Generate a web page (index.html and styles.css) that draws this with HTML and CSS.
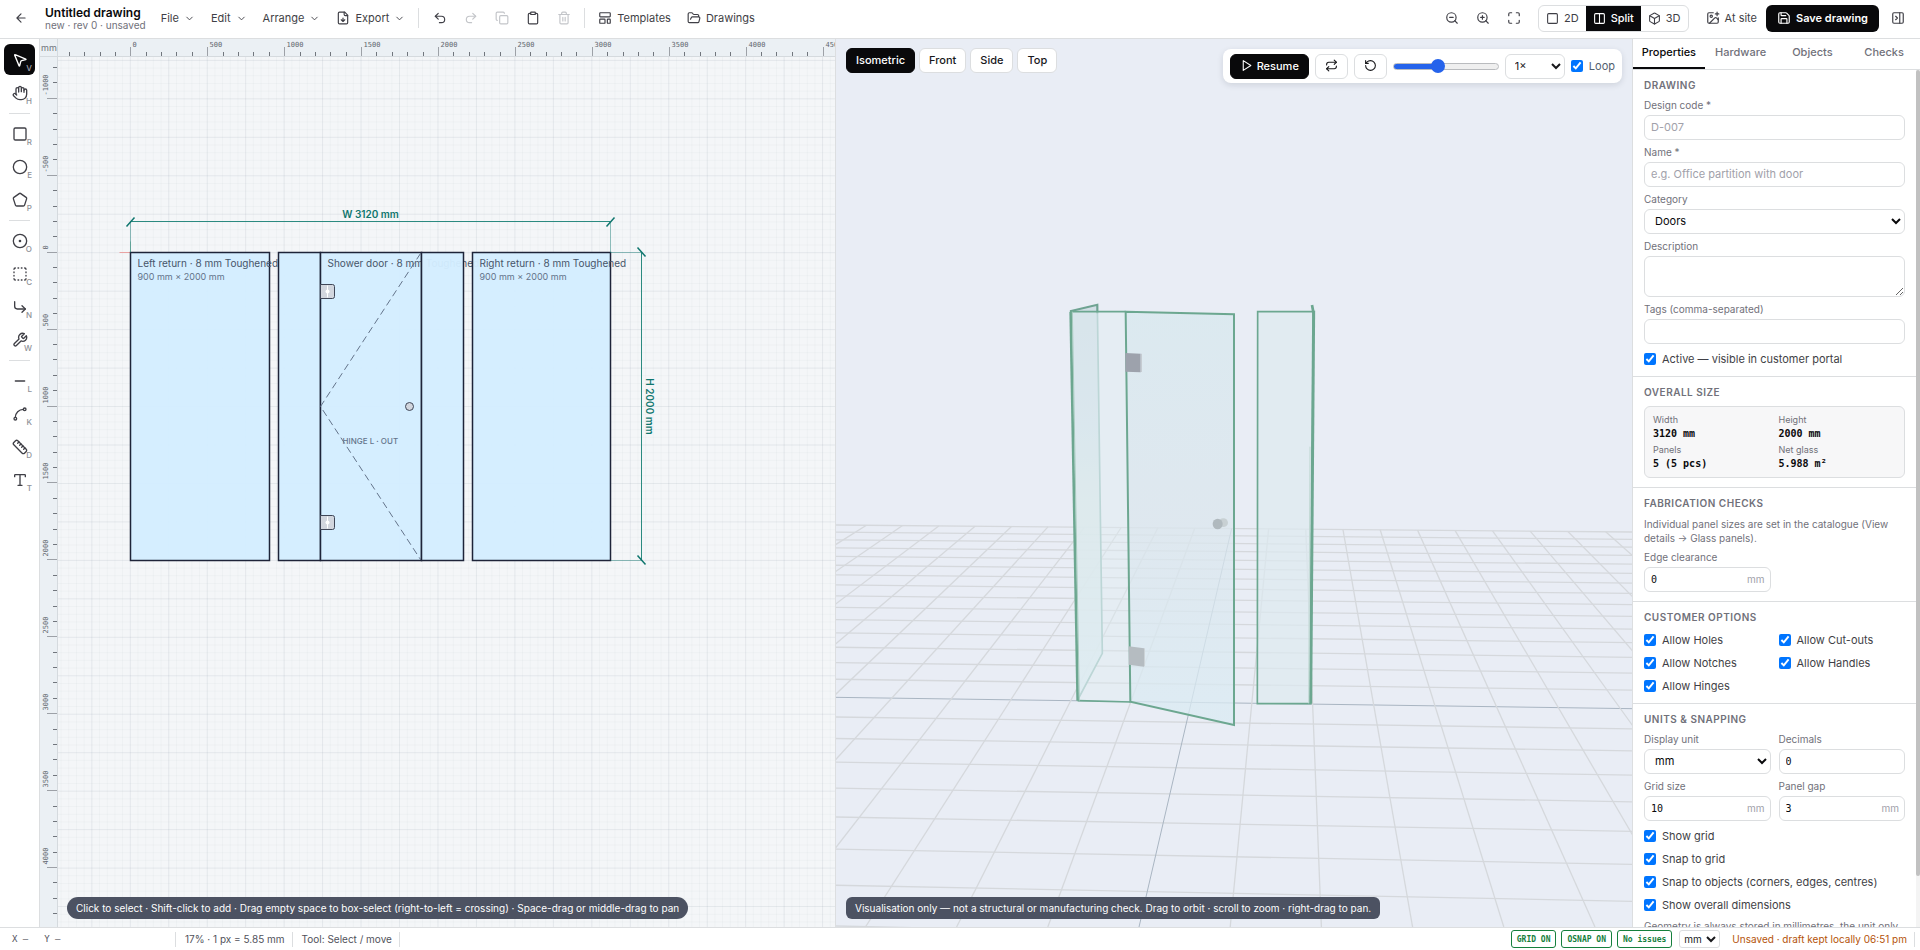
FILE: index.html
```html
<!DOCTYPE html>
<html lang="en">
<head>
<meta charset="utf-8">
<title>Untitled drawing</title>
<link rel="stylesheet" href="styles.css">
</head>
<body>
<svg class="sprite" aria-hidden="true">
  <symbol id="i-back" viewBox="0 0 24 24"><path d="m12 19-7-7 7-7M19 12H5"/></symbol>
  <symbol id="i-chev" viewBox="0 0 24 24"><path d="m6 9 6 6 6-6"/></symbol>
  <symbol id="i-file" viewBox="0 0 24 24"><path d="M15 2H6a2 2 0 0 0-2 2v16a2 2 0 0 0 2 2h12a2 2 0 0 0 2-2V7Z"/><path d="M14 2v4a2 2 0 0 0 2 2h4M12 18v-6M9 15l3 3 3-3"/></symbol>
  <symbol id="i-undo" viewBox="0 0 24 24"><path d="M9 14 4 9l5-5"/><path d="M4 9h10.500a5.500 5.500 0 0 1 0 11H11"/></symbol>
  <symbol id="i-redo" viewBox="0 0 24 24"><path d="m15 14 5-5-5-5"/><path d="M20 9H9.500a5.500 5.500 0 0 0 0 11H13"/></symbol>
  <symbol id="i-copy" viewBox="0 0 24 24"><rect x="8" y="8" width="14" height="14" rx="2"/><path d="M4 16c-1.100 0-2-.9-2-2V4c0-1.100.9-2 2-2h10c1.100 0 2 .9 2 2"/></symbol>
  <symbol id="i-paste" viewBox="0 0 24 24"><rect x="8" y="2" width="8" height="4" rx="1"/><path d="M16 4h2a2 2 0 0 1 2 2v14a2 2 0 0 1-2 2H6a2 2 0 0 1-2-2V6a2 2 0 0 1 2-2h2"/></symbol>
  <symbol id="i-trash" viewBox="0 0 24 24"><path d="M3 6h18M19 6v14c0 1-1 2-2 2H7c-1 0-2-1-2-2V6M8 6V4c0-1 1-2 2-2h4c1 0 2 1 2 2v2M10 11v6M14 11v6"/></symbol>
  <symbol id="i-template" viewBox="0 0 24 24"><rect x="3" y="3" width="18" height="7" rx="1"/><rect x="3" y="14" width="9" height="7" rx="1"/><rect x="16" y="14" width="5" height="7" rx="1"/></symbol>
  <symbol id="i-folder" viewBox="0 0 24 24"><path d="m6 14 1.500-2.900A2 2 0 0 1 9.240 10H20a2 2 0 0 1 1.940 2.500l-1.540 6a2 2 0 0 1-1.950 1.500H4a2 2 0 0 1-2-2V5a2 2 0 0 1 2-2h3.900a2 2 0 0 1 1.690.9l.81 1.200a2 2 0 0 0 1.670.9H18a2 2 0 0 1 2 2v2"/></symbol>
  <symbol id="i-zout" viewBox="0 0 24 24"><circle cx="11" cy="11" r="8"/><path d="m21 21-4.350-4.350M8 11h6"/></symbol>
  <symbol id="i-zin" viewBox="0 0 24 24"><circle cx="11" cy="11" r="8"/><path d="m21 21-4.350-4.350M8 11h6M11 8v6"/></symbol>
  <symbol id="i-fit" viewBox="0 0 24 24"><path d="M8 3H5a2 2 0 0 0-2 2v3M21 8V5a2 2 0 0 0-2-2h-3M3 16v3a2 2 0 0 0 2 2h3M16 21h3a2 2 0 0 0 2-2v-3"/></symbol>
  <symbol id="i-square" viewBox="0 0 24 24"><rect x="3" y="3" width="18" height="18" rx="2"/></symbol>
  <symbol id="i-split" viewBox="0 0 24 24"><rect x="3" y="3" width="18" height="18" rx="2"/><path d="M12 3v18"/></symbol>
  <symbol id="i-box" viewBox="0 0 24 24"><path d="M21 8a2 2 0 0 0-1-1.730l-7-4a2 2 0 0 0-2 0l-7 4A2 2 0 0 0 3 8v8a2 2 0 0 0 1 1.730l7 4a2 2 0 0 0 2 0l7-4A2 2 0 0 0 21 16Z"/><path d="m3.300 7 8.700 5 8.700-5M12 22V12"/></symbol>
  <symbol id="i-site" viewBox="0 0 24 24"><path d="M16 5h6M19 2v6M21 11.500V19a2 2 0 0 1-2 2H5a2 2 0 0 1-2-2V5a2 2 0 0 1 2-2h7.500"/><path d="m21 15-3.086-3.086a2 2 0 0 0-2.828 0L6 21"/><circle cx="9" cy="9" r="2"/></symbol>
  <symbol id="i-save" viewBox="0 0 24 24"><path d="M15.200 3a2 2 0 0 1 1.400.6l3.800 3.800a2 2 0 0 1 .6 1.400V19a2 2 0 0 1-2 2H5a2 2 0 0 1-2-2V5a2 2 0 0 1 2-2z"/><path d="M17 21v-7a1 1 0 0 0-1-1H8a1 1 0 0 0-1 1v7M7 3v4a1 1 0 0 0 1 1h7"/></symbol>
  <symbol id="i-panel" viewBox="0 0 24 24"><rect x="3" y="3" width="18" height="18" rx="2"/><path d="M15 3v18M8 9l3 3-3 3"/></symbol>
  <symbol id="i-play" viewBox="0 0 24 24"><path d="M6 3 20 12 6 21Z"/></symbol>
  <symbol id="i-repeat" viewBox="0 0 24 24"><path d="m17 2 4 4-4 4"/><path d="M3 11v-1a4 4 0 0 1 4-4h14M7 22l-4-4 4-4"/><path d="M21 13v1a4 4 0 0 1-4 4H3"/></symbol>
  <symbol id="i-rotate" viewBox="0 0 24 24"><path d="M3 12a9 9 0 1 0 9-9 9.750 9.750 0 0 0-6.740 2.740L3 8"/><path d="M3 3v5h5"/></symbol>
  <symbol id="i-select" viewBox="0 0 24 24"><path d="M4.037 4.688a.495.495 0 0 1 .651-.651l16 6.500a.5.5 0 0 1-.063.947l-6.124 1.580a2 2 0 0 0-1.438 1.435l-1.579 6.126a.5.5 0 0 1-.947.063z"/></symbol>
  <symbol id="i-hand" viewBox="0 0 24 24"><path d="M18 11V6a2 2 0 0 0-4 0M14 10V4a2 2 0 0 0-4 0v2M10 10.500V6a2 2 0 0 0-4 0v8"/><path d="M18 8a2 2 0 1 1 4 0v6a8 8 0 0 1-8 8h-2c-2.800 0-4.500-.86-5.990-2.340l-3.600-3.600a2 2 0 0 1 2.830-2.820L7 15"/></symbol>
  <symbol id="i-circle" viewBox="0 0 24 24"><circle cx="12" cy="12" r="10"/></symbol>
  <symbol id="i-pentagon" viewBox="0 0 24 24"><path d="M10.830 2.380a2 2 0 0 1 2.340 0l8 5.740a2 2 0 0 1 .73 2.250l-3.040 9.260a2 2 0 0 1-1.900 1.370H7.040a2 2 0 0 1-1.900-1.370L2.100 10.370a2 2 0 0 1 .73-2.250z"/></symbol>
  <symbol id="i-hole" viewBox="0 0 24 24"><circle cx="12" cy="12" r="10"/><circle cx="12" cy="12" r="1"/></symbol>
  <symbol id="i-dashed" viewBox="0 0 24 24"><path d="M5 3a2 2 0 0 0-2 2M19 3a2 2 0 0 1 2 2M21 19a2 2 0 0 1-2 2M5 21a2 2 0 0 1-2-2M9 3h1M9 21h1M14 3h1M14 21h1M3 9v1M21 9v1M3 14v1M21 14v1"/></symbol>
  <symbol id="i-notch" viewBox="0 0 24 24"><path d="m15 10 5 5-5 5"/><path d="M4 4v7a4 4 0 0 0 4 4h12"/></symbol>
  <symbol id="i-wrench" viewBox="0 0 24 24"><path d="M14.700 6.300a1 1 0 0 0 0 1.400l1.600 1.600a1 1 0 0 0 1.400 0l3.770-3.770a6 6 0 0 1-7.940 7.940l-6.910 6.910a2.120 2.120 0 0 1-3-3l6.910-6.910a6 6 0 0 1 7.940-7.940l-3.760 3.760z"/></symbol>
  <symbol id="i-line" viewBox="0 0 24 24"><path d="M5 12h14"/></symbol>
  <symbol id="i-spline" viewBox="0 0 24 24"><circle cx="19" cy="5" r="2"/><circle cx="5" cy="19" r="2"/><path d="M5 17A12 12 0 0 1 17 5"/></symbol>
  <symbol id="i-ruler" viewBox="0 0 24 24"><path d="M21.300 15.300a2.400 2.400 0 0 1 0 3.400l-2.600 2.600a2.400 2.400 0 0 1-3.400 0L2.700 8.700a2.410 2.410 0 0 1 0-3.400l2.600-2.600a2.410 2.410 0 0 1 3.400 0Z"/><path d="m14.500 12.500 2-2M11.500 9.500l2-2M8.500 6.500l2-2M17.500 15.500l2-2"/></symbol>
  <symbol id="i-type" viewBox="0 0 24 24"><path d="M12 4v16M4 7V5a1 1 0 0 1 1-1h14a1 1 0 0 1 1 1v2M9 20h6"/></symbol>
</svg>

<div class="app">
  <header class="topbar">
    <button class="icon-btn" aria-label="Back"><svg class="icon"><use href="#i-back"/></svg></button>
    <div class="doc">
      <h1 class="doc-title">Untitled drawing</h1>
      <p class="doc-sub">new · rev 0 · unsaved</p>
    </div>
    <nav class="menus">
      <button class="menu-btn">File<svg class="chev"><use href="#i-chev"/></svg></button>
      <button class="menu-btn">Edit<svg class="chev"><use href="#i-chev"/></svg></button>
      <button class="menu-btn">Arrange<svg class="chev"><use href="#i-chev"/></svg></button>
      <button class="menu-btn"><svg class="icon"><use href="#i-file"/></svg>Export<svg class="chev"><use href="#i-chev"/></svg></button>
    </nav>
    <span class="bar-sep"></span>
    <div class="group">
      <button class="icon-btn" aria-label="Undo"><svg class="icon"><use href="#i-undo"/></svg></button>
      <button class="icon-btn" aria-label="Redo" disabled><svg class="icon"><use href="#i-redo"/></svg></button>
      <button class="icon-btn" aria-label="Copy" disabled><svg class="icon"><use href="#i-copy"/></svg></button>
      <button class="icon-btn" aria-label="Paste"><svg class="icon"><use href="#i-paste"/></svg></button>
      <button class="icon-btn" aria-label="Delete" disabled><svg class="icon"><use href="#i-trash"/></svg></button>
    </div>
    <span class="bar-sep"></span>
    <div class="group">
      <button class="menu-btn"><svg class="icon"><use href="#i-template"/></svg>Templates</button>
      <button class="menu-btn"><svg class="icon"><use href="#i-folder"/></svg>Drawings</button>
    </div>
    <div class="topbar-right">
      <div class="group">
        <button class="icon-btn" aria-label="Zoom out"><svg class="icon"><use href="#i-zout"/></svg></button>
        <button class="icon-btn" aria-label="Zoom in"><svg class="icon"><use href="#i-zin"/></svg></button>
        <button class="icon-btn" aria-label="Fit to view"><svg class="icon"><use href="#i-fit"/></svg></button>
      </div>
      <div class="segmented">
        <button class="seg"><svg class="icon-sm"><use href="#i-square"/></svg>2D</button>
        <button class="seg seg-on"><svg class="icon-sm"><use href="#i-split"/></svg>Split</button>
        <button class="seg"><svg class="icon-sm"><use href="#i-box"/></svg>3D</button>
      </div>
      <button class="menu-btn"><svg class="icon"><use href="#i-site"/></svg>At site</button>
      <button class="save-btn"><svg class="icon"><use href="#i-save"/></svg>Save drawing</button>
      <button class="icon-btn" aria-label="Close panel"><svg class="icon"><use href="#i-panel"/></svg></button>
    </div>
  </header>

  <main class="work">
    <aside class="tools">
      <button class="tool tool-on" aria-label="Select"><svg class="tool-icon"><use href="#i-select"/></svg><kbd>V</kbd></button>
      <button class="tool" aria-label="Pan"><svg class="tool-icon"><use href="#i-hand"/></svg><kbd>H</kbd></button>
      <span class="tool-sep"></span>
      <button class="tool" aria-label="Rectangle"><svg class="tool-icon"><use href="#i-square"/></svg><kbd>R</kbd></button>
      <button class="tool" aria-label="Ellipse"><svg class="tool-icon"><use href="#i-circle"/></svg><kbd>E</kbd></button>
      <button class="tool" aria-label="Polygon"><svg class="tool-icon"><use href="#i-pentagon"/></svg><kbd>P</kbd></button>
      <span class="tool-sep"></span>
      <button class="tool" aria-label="Hole"><svg class="tool-icon"><use href="#i-hole"/></svg><kbd>O</kbd></button>
      <button class="tool" aria-label="Cut-out"><svg class="tool-icon"><use href="#i-dashed"/></svg><kbd>C</kbd></button>
      <button class="tool" aria-label="Notch"><svg class="tool-icon"><use href="#i-notch"/></svg><kbd>N</kbd></button>
      <button class="tool" aria-label="Hardware"><svg class="tool-icon"><use href="#i-wrench"/></svg><kbd>W</kbd></button>
      <span class="tool-sep"></span>
      <button class="tool" aria-label="Line"><svg class="tool-icon"><use href="#i-line"/></svg><kbd>L</kbd></button>
      <button class="tool" aria-label="Curve"><svg class="tool-icon"><use href="#i-spline"/></svg><kbd>K</kbd></button>
      <button class="tool" aria-label="Dimension"><svg class="tool-icon"><use href="#i-ruler"/></svg><kbd>D</kbd></button>
      <button class="tool" aria-label="Text"><svg class="tool-icon"><use href="#i-type"/></svg><kbd>T</kbd></button>
    </aside>

    <section class="plan">
      <svg class="plan-svg" role="img" aria-label="2D drawing">
        <g id="plan-grid"></g>
        <g transform="translate(90.5 213.5)">
          <path class="axis-x" d="M-11 0H0"/><path class="axis-y" d="M0-11V0"/>
          <g class="glass">
            <rect x="0" y="0" width="139" height="308"/>
            <rect x="148" y="0" width="42" height="308"/>
            <rect x="190" y="0" width="101" height="308"/>
          </g>
          <text class="t-name" x="7" y="14">Left return · 8 mm Toughened</text>
          <text class="t-size" x="7" y="27">900 mm × 2000 mm</text>
          <text class="t-name" x="197" y="14">Shower door · 8 mm Toughened</text>
          <path class="swing" d="M290 1 190 154 290 307"/>
          <g class="hw">
            <path d="M190 32h12a2 2 0 0 1 2 2v10a2 2 0 0 1-2 2h-12z"/><path d="M190 263h12a2 2 0 0 1 2 2v10a2 2 0 0 1-2 2h-12z"/>
            <circle cx="279" cy="154" r="4"/>
          </g>
          <path class="hw-cross" d="M197 33v12M197 264v12"/><circle class="hw-dot" cx="197" cy="39" r="2"/><circle class="hw-dot" cx="197" cy="270" r="2"/>
          <text class="t-hinge" x="212" y="191">HINGE L · OUT</text>
          <g class="glass">
            <rect x="291" y="0" width="42" height="308"/>
            <rect x="342" y="0" width="138" height="308"/>
          </g>
          <text class="t-name" x="349" y="14">Right return · 8 mm Toughened</text>
          <text class="t-size" x="349" y="27">900 mm × 2000 mm</text>
          <path class="dim-ext" d="M0 0V-31M480 0V-31M480 0H511M480 308H511"/>
          <path class="dim" d="M0-31H480M511 0V308"/>
          <path class="dim-tick" d="M-4-26 4-35M476-26 484-35M507-5 515 4M507 303 515 312"/>
          <text class="t-dim" x="240" y="-35" text-anchor="middle">W 3120 mm</text>
          <text class="t-dim" x="0" y="0" text-anchor="middle" transform="translate(515 154) rotate(90)">H 2000 mm</text>
        </g>
        <g id="plan-rulers"></g>
      </svg>
      <p class="hint hint-pill">Click to select · Shift-click to add · Drag empty space to box-select (right-to-left = crossing) · Space-drag or middle-drag to pan</p>
    </section>

    <section class="view">
      <svg class="view-svg" viewBox="0 0 796 888" preserveAspectRatio="xMidYMid slice" role="img" aria-label="3D preview">
        <defs>
          <linearGradient id="side" x1="0" y1="0" x2="0" y2="1"><stop offset="0" stop-color="#cddbe2"/><stop offset=".3" stop-color="#d2e0e9"/><stop offset=".5" stop-color="#d9e6e7"/><stop offset="1" stop-color="#dcebf2"/></linearGradient>
          <linearGradient id="door" x1="0" y1="0" x2="0" y2="1"><stop offset="0" stop-color="#d7e8ee"/><stop offset=".5" stop-color="#dbe6ed"/><stop offset="1" stop-color="#daebf3"/></linearGradient>
        </defs>
        <g id="floor"></g>
        <g transform="translate(194 241) scale(.33333)">
          <path d="M120 95 202 74 217 1120 143 1260Z" fill="url(#side)" fill-opacity=".85"/>
          <path d="M202 74 217 1120 143 1260" fill="none" stroke="#9ec3bf" stroke-width="5"/>
          <path d="M120 94 202 74V100" fill="none" stroke="#6fa392" stroke-width="6"/>
          <path d="M120 95 287 95 301 1265 143 1262Z" fill="#e0edf2" fill-opacity=".45"/>
          <path d="M120 95H287M301 1266 143 1262" stroke="#6ca790" stroke-width="5"/>
          <path d="M122 95 143 1262" stroke="#6ca790" stroke-width="8"/>
          <path d="M127 95 148 1262" stroke="#a8cbbf" stroke-width="3"/>
          <path d="M683 95H850L842 1271H682Z" fill="#dde9ef" fill-opacity=".7" stroke="#6ca790" stroke-width="5"/>
          <path d="M851 92 842 1271" stroke="#6ca790" stroke-width="9"/>
          <path d="M846 75 850 96" stroke="#6ca790" stroke-width="8"/>
          <path d="M840 500 836 1270" stroke="#c0d8d3" stroke-width="3"/>
          <path d="M287 95 612 103V1335L301 1265Z" fill="url(#door)" fill-opacity=".75" stroke="#6ca790" stroke-width="6"/>
          <ellipse cx="580" cy="728" rx="14" ry="13" fill="#c8d0d3"/><ellipse cx="563" cy="732" rx="15" ry="16" fill="#b0b9be"/>
          <path d="M286 219 332 221V277L286 275Z" fill="#9da2ac"/><path d="M332 221h4v55h-4z" fill="#c6ccd2"/>
          <path d="M296 1099 342 1105V1160L296 1154Z" fill="#b5bcc1"/><path d="M342 1105h3v54h-3z" fill="#ccd3d7"/>
        </g>
      </svg>
      <div class="views">
        <button class="chip chip-on">Isometric</button>
        <button class="chip">Front</button>
        <button class="chip">Side</button>
        <button class="chip">Top</button>
      </div>
      <div class="player">
        <button class="chip chip-on"><svg class="icon-sm"><use href="#i-play"/></svg>Resume</button>
        <button class="chip" aria-label="Reverse"><svg class="icon-sm"><use href="#i-repeat"/></svg></button>
        <button class="chip" aria-label="Reset"><svg class="icon-sm"><use href="#i-rotate"/></svg></button>
        <input class="slider" type="range" min="0" max="100" value="41" aria-label="Progress">
        <select class="speed" aria-label="Speed"><option>1×</option></select>
        <label class="loop"><input class="tick" type="checkbox" checked>Loop</label>
      </div>
      <p class="hint">Visualisation only — not a structural or manufacturing check. Drag to orbit · scroll to zoom · right-drag to pan.</p>
    </section>

    <aside class="panel">
      <div class="tabs">
        <button class="tab tab-on">Properties</button>
        <button class="tab">Hardware</button>
        <button class="tab">Objects</button>
        <button class="tab">Checks</button>
      </div>
      <div class="panel-body">
        <div class="sections">
          <section class="sec">
            <h2>Drawing</h2>
            <label class="field">Design code *<input class="box" type="text" placeholder="D-007"></label>
            <label class="field">Name *<input class="box" type="text" placeholder="e.g. Office partition with door"></label>
            <label class="field">Category<select class="box"><option>Doors</option></select></label>
            <label class="field">Description<textarea class="box area"></textarea></label>
            <label class="field">Tags (comma-separated)<input class="box" type="text"></label>
            <label class="check"><input class="tick" type="checkbox" checked>Active — visible in customer portal</label>
          </section>
          <section class="sec">
            <h2>Overall size</h2>
            <dl class="stats">
              <div><dt>Width</dt><dd>3120 mm</dd></div>
              <div><dt>Height</dt><dd>2000 mm</dd></div>
              <div><dt>Panels</dt><dd>5 (5 pcs)</dd></div>
              <div><dt>Net glass</dt><dd>5.988 m²</dd></div>
            </dl>
          </section>
          <section class="sec">
            <h2>Fabrication checks</h2>
            <p class="note">Individual panel sizes are set in the catalogue (View details → Glass panels).</p>
            <div class="cols">
              <label class="field">Edge clearance<span class="unit"><input class="box num" type="text" value="0"><i>mm</i></span></label>
            </div>
          </section>
          <section class="sec">
            <h2>Customer options</h2>
            <div class="cols">
              <label class="check"><input class="tick" type="checkbox" checked>Allow Holes</label>
              <label class="check"><input class="tick" type="checkbox" checked>Allow Cut-outs</label>
              <label class="check"><input class="tick" type="checkbox" checked>Allow Notches</label>
              <label class="check"><input class="tick" type="checkbox" checked>Allow Handles</label>
              <label class="check"><input class="tick" type="checkbox" checked>Allow Hinges</label>
            </div>
          </section>
          <section class="sec">
            <h2>Units &amp; snapping</h2>
            <div class="cols">
              <label class="field">Display unit<select class="box"><option>mm</option></select></label>
              <label class="field">Decimals<input class="box num" type="text" value="0"></label>
              <label class="field">Grid size<span class="unit"><input class="box num" type="text" value="10"><i>mm</i></span></label>
              <label class="field">Panel gap<span class="unit"><input class="box num" type="text" value="3"><i>mm</i></span></label>
            </div>
            <label class="check"><input class="tick" type="checkbox" checked>Show grid</label>
            <label class="check"><input class="tick" type="checkbox" checked>Snap to grid</label>
            <label class="check"><input class="tick" type="checkbox" checked>Snap to objects (corners, edges, centres)</label>
            <label class="check"><input class="tick" type="checkbox" checked>Show overall dimensions</label>
            <p class="note">Geometry is always stored in millimetres, the unit only</p>
          </section>
        </div>
        <div class="scroll-track"><div class="scroll-thumb"></div></div>
      </div>
    </aside>
  </main>

  <footer class="status">
    <span class="coords"><span>X –</span><span>Y –</span></span>
    <span class="cell">17% · 1 px = 5.85 mm</span>
    <span class="cell">Tool: Select / move</span>
    <span class="status-right">
      <button class="badge">GRID ON</button>
      <button class="badge">OSNAP ON</button>
      <button class="badge">No issues</button>
      <select class="unit-select" aria-label="Unit"><option>mm</option></select>
      <span class="unsaved">Unsaved · draft kept locally 06:51 pm</span>
    </span>
  </footer>
</div>
<script src="scene.js"></script>
</body>
</html>
```
FILE: styles.css
```css
* { box-sizing: border-box; margin: 0; padding: 0; }
html, body { height: 100%; }
body { font-family: Inter, "Liberation Sans", sans-serif; font-size: 11px; color: #3f3f46; background: #fff; overflow: hidden; }
button, input, select, textarea { font: inherit; color: inherit; }
button { background: none; border: 0; display: inline-flex; align-items: center; justify-content: center; white-space: nowrap; }
.sprite { position: absolute; width: 0; height: 0; }
.icon, .icon-sm, .tool-icon, .chev { fill: none; stroke: currentColor; stroke-width: 2; stroke-linecap: round; stroke-linejoin: round; flex: none; }
.icon { width: 14px; height: 14px; }
.icon-sm { width: 13px; height: 13px; }
.chev { width: 11px; height: 11px; }
.tool-icon { width: 16px; height: 16px; }

.app { display: grid; grid-template-rows: auto 1fr auto; height: 100vh; }

.topbar { display: flex; align-items: center; height: 39px; padding: 0 8px 2px 6px; border-bottom: 1px solid #dcdee0; }
.icon-btn { width: 29px; height: 27px; border-radius: 6px; }
.icon-btn:disabled { color: #c3c5c9; }
.doc { margin: 0 8px 0 10px; line-height: 13px; }
.doc-title { font-size: 12px; font-weight: 600; color: #09090b; }
.doc-sub { font-size: 10px; line-height: 12px; color: #71717a; }
.menus, .group { display: flex; align-items: center; gap: 2px; }
.menu-btn { height: 27px; padding: 0 7px; gap: 5px; }
.bar-sep { width: 1px; height: 20px; margin: 0 6px; background: #dcdee0; }
.topbar-right { display: flex; align-items: center; margin-left: auto; }
.segmented { display: flex; height: 27px; margin: 0 10px 0 9px; border: 1px solid #dcdee0; border-radius: 6px; overflow: hidden; }
.seg { gap: 5px; padding: 0 7px; }
.seg-on { background: #09090b; color: #fff; font-weight: 500; }
.save-btn { height: 27px; margin: 0 4px 0 2px; padding: 0 11px; gap: 5px; border-radius: 6px; background: #09090b; color: #fff; font-weight: 600; }

.work { display: grid; grid-template-columns: 40px 1fr 1fr 288px; min-height: 0; }

.tools { display: flex; flex-direction: column; align-items: center; gap: 2px; padding-top: 5px; border-right: 1px solid #dcdee0; }
.tool { position: relative; width: 31px; height: 31px; border-radius: 6px; }
.tool kbd { position: absolute; right: 3px; bottom: 2px; font: 500 8px/10px Inter, sans-serif; color: #8e9198; }
.tool-on { background: #09090b; color: #fff; }
.tool-on kbd { color: #a1a1aa; }
.tool-sep { width: 21px; height: 1px; margin: 3px 0 2px; background: #dcdee0; }

.plan, .view { position: relative; min-width: 0; min-height: 0; overflow: hidden; }
.plan { background: #f4f6f8; border-right: 1px solid #dcdee0; }
.view { background: #e9edf5; }
.plan-svg, .view-svg { position: absolute; inset: 0; width: 100%; height: 100%; }
.g-minor { stroke: #64748b; stroke-opacity: .04; }
.g-major { stroke: #64748b; stroke-opacity: .11; }
.ruler-bg { fill: #ebf0f4; }
.ruler-line { stroke: #d5dade; }
.r-tick { stroke: #71767d; stroke-width: 1; }
.r-tick-major { stroke: #9da1a7; stroke-width: 1; }
.r-label { font: 7px "DejaVu Sans Mono", monospace; fill: #62676f; }
.r-unit { font: 9px Inter, sans-serif; fill: #71767d; }
.axis-x { stroke: #e9a3a3; }
.axis-y { stroke: #a3c9b8; }
.glass rect { fill: #d3edff; fill-opacity: .96; stroke: #1e2439; stroke-width: 1.5; }
.swing { fill: none; stroke: #64748b; stroke-dasharray: 7 4; }
.hw { fill: #d2d6de; stroke: #3f4657; }
.hw-cross { stroke: #fff; }
.hw-dot { fill: #fff; }
.t-name { font-size: 10px; fill: #475569; }
.t-size { font-size: 9px; fill: #64748b; }
.t-hinge { font-size: 8px; font-weight: 500; fill: #64748b; }
.dim { stroke: #2b8a80; }
.dim-ext { stroke: #0f766e; stroke-opacity: .45; }
.dim-tick { stroke: #0f766e; stroke-width: 1.5; }
.t-dim { font-size: 10px; font-weight: 600; fill: #0f766e; }
.f-line { stroke: #d5d8dc; stroke-width: 1.3; }
.f-axis { stroke: #a9b5c2; }

.hint { position: absolute; left: 10px; bottom: 8px; height: 22px; padding: 0 9px; border-radius: 6px; background: #4c5262; color: #fff; font-size: 10px; line-height: 22px; white-space: nowrap; }
.hint-pill { left: 27px; border-radius: 11px; }
.views { position: absolute; left: 10px; top: 9px; display: flex; gap: 4px; }
.chip { height: 25px; min-width: 32px; padding: 0 9px 1px; gap: 4px; border: 1px solid #dcdee0; border-radius: 6px; background: #fff; color: #18181b; font-weight: 500; }
.chip-on { background: #09090b; border-color: #09090b; color: #fff; }
.player { position: absolute; right: 10px; top: 10px; display: flex; align-items: center; gap: 6px; height: 34px; padding: 0 7px; border-radius: 8px; background: #fff; box-shadow: 0 2px 6px rgba(15, 23, 42, .12); }
.slider { appearance: none; width: 106px; height: 7px; border: 1px solid #b9bbbe; border-radius: 4px; background: linear-gradient(90deg, #2563eb 41%, #efefef 41%); }
.slider::-webkit-slider-thumb { appearance: none; width: 14px; height: 14px; border-radius: 50%; background: #2563eb; }
.speed { width: 60px; height: 25px; padding-left: 5px; border: 1px solid #dcdee0; border-radius: 6px; background: #fff; color: #18181b; }
.loop { display: flex; align-items: center; gap: 6px; color: #52606f; }
.tick { width: 12px; height: 12px; flex: none; accent-color: #0075ff; }

.panel { display: flex; flex-direction: column; min-height: 0; border-left: 1px solid #dcdee0; background: #fff; }
.tabs { display: flex; height: 31px; flex: none; border-bottom: 1px solid #dcdee0; }
.tab { flex: 1; padding-bottom: 4px; border-bottom: 2px solid transparent; font-weight: 500; color: #71717a; padding-top: 2px; }
.tab-on { color: #09090b; border-color: #09090b; }
.panel-body { display: grid; grid-template-columns: 1fr 4px; flex: 1; min-height: 0; }
.sections { overflow: hidden; min-height: 0; }
.scroll-track { background: #f4f4f4; }
.scroll-thumb { height: 94%; border-radius: 2px; background: #c1c1c1; }
.sec { display: flex; flex-direction: column; gap: 6px; padding: 9px 11px; border-bottom: 1px solid #dcdee0; }
.sec h2 { margin-bottom: 2px; font-size: 10px; line-height: 12px; font-weight: 600; letter-spacing: .5px; text-transform: uppercase; color: #71717a; }
.field { display: flex; flex-direction: column; gap: 3px; font-size: 10px; line-height: 13px; color: #71717a; }
.box { width: 100%; height: 25px; padding: 0 6px 1px; border: 1px solid #dcdee0; border-radius: 6px; background: #fff; color: #09090b; font-size: 11px; outline: 0; }
.box::placeholder { color: #a1a1aa; }
.area { height: 41px; display: block; resize: vertical; }
.num { font-family: "DejaVu Sans Mono", monospace; font-size: 10px; }
.unit { position: relative; display: block; }
.unit i { position: absolute; right: 6px; top: 6px; font-style: normal; color: #a1a1aa; }
.check { display: flex; align-items: center; gap: 6px; height: 17px; }
.cols { display: grid; grid-template-columns: 1fr 1fr; gap: 6px 8px; }
.note { font-size: 10px; line-height: 14px; color: #71717a; }
.stats { display: grid; grid-template-columns: 1fr 1fr; gap: 2px 8px; padding: 6px 8px; border: 1px solid #dcdee0; border-radius: 6px; background: #f7f7f8; }
.stats dt { font-size: 9px; line-height: 14px; color: #71717a; }
.stats dd { font: 700 10px/14px "DejaVu Sans Mono", monospace; color: #09090b; }

.status { display: flex; align-items: center; height: 23px; border-top: 1px solid #dcdee0; font-size: 10px; color: #52525b; }
.coords { display: flex; gap: 16px; width: 175px; padding-left: 12px; font: 9px "DejaVu Sans Mono", monospace; }
.cell { height: 15px; line-height: 15px; padding: 0 7px 0 9px; border-left: 1px solid #dcdee0; }
.cell + .cell { border-right: 1px solid #dcdee0; }
.status-right { display: flex; align-items: center; gap: 5px; margin-left: auto; padding-right: 5px; }
.badge { height: 18px; padding: 0 5px; border: 1px solid #15803d; border-radius: 3px; font: 700 8px "DejaVu Sans Mono", monospace; color: #15803d; }
.unit-select { width: 41px; height: 18px; margin-left: 2px; border: 1px solid #dcdee0; border-radius: 3px; background: #fff; color: #18181b; }
.unsaved { height: 15px; margin-left: 7px; padding-right: 7px; border-right: 1px solid #dcdee0; line-height: 15px; color: #b45309; }
```
FILE: scene.js
```js
const NS = 'http://www.w3.org/2000/svg';

function add(parent, tag, attrs, text) {
  const el = document.createElementNS(NS, tag);
  for (const key in attrs) el.setAttribute(key, attrs[key]);
  if (text !== undefined) el.textContent = text;
  parent.appendChild(el);
  return el;
}

// Plan grid and rulers: origin in pane pixels, scale in pixels per millimetre.
const OX = 90.3, OY = 213.7, S = 2 / 13, RULER = 18;

function drawPlan() {
  const grid = document.getElementById('plan-grid');
  const rulers = document.getElementById('plan-rulers');
  grid.replaceChildren();
  rulers.replaceChildren();
  const pane = document.querySelector('.plan');
  const W = pane.clientWidth, H = pane.clientHeight;
  let minor = '', major = '';
  for (let mm = -2000; OX + mm * S < W; mm += 50) {
    const seg = `M${OX + mm * S} 0V${H}`;
    if (mm % 250 === 0) major += seg; else minor += seg;
  }
  for (let mm = -2000; OY + mm * S < H; mm += 50) {
    const seg = `M0 ${OY + mm * S}H${W}`;
    if (mm % 250 === 0) major += seg; else minor += seg;
  }
  add(grid, 'path', { d: minor, class: 'g-minor' });
  add(grid, 'path', { d: major, class: 'g-major' });

  add(rulers, 'rect', { x: 0, y: 0, width: W, height: RULER, class: 'ruler-bg' });
  add(rulers, 'rect', { x: 0, y: 0, width: RULER, height: H, class: 'ruler-bg' });
  for (let mm = -400; OX + mm * S < W; mm += 100) {
    const x = Math.round(OX + mm * S) + 0.5;
    const big = mm % 500 === 0;
    add(rulers, 'path', { d: `M${x} ${big ? 8 : 13}V17`, class: big ? 'r-tick-major' : 'r-tick' });
    if (big) add(rulers, 'text', { x: x + 2, y: 8, class: 'r-label' }, mm);
  }
  for (let mm = -1200; OY + mm * S < H; mm += 100) {
    const y = Math.round(OY + mm * S) - 0.5;
    const big = mm % 500 === 0;
    add(rulers, 'path', { d: `M${big ? 7 : 13} ${y}H17`, class: big ? 'r-tick-major' : 'r-tick' });
    if (big) add(rulers, 'text', { transform: `translate(8 ${y - 3}) rotate(-90)`, class: 'r-label' }, mm);
  }
  add(rulers, 'rect', { x: 0, y: 0, width: RULER, height: RULER, class: 'ruler-bg' });
  add(rulers, 'path', { d: `M0 17.5H${W}M17.5 0V${H}`, class: 'ruler-line' });
  add(rulers, 'text', { x: 1, y: 12, class: 'r-unit' }, 'mm');
}

// Floor grid in one-point perspective, in the 796 x 888 view box.
function drawFloor() {
  const floor = document.getElementById('floor');
  const left = n => 461 + (592 + 31.27 * n) / (1 - 0.04263 * n) / 3;
  const right = n => 461 + (626 + 31.24 * n) / (1 - 0.04264 * n) / 3;
  const vx = 459, vy = 217;
  const row = n => ({ x1: 0, y1: left(n), x2: 796, y2: right(n) });
  const far = row(-15);
  const slope = (far.y2 - far.y1) / 796;
  for (let n = -15; n <= 9; n++) {
    add(floor, 'line', { ...row(n), class: n === 0 ? 'f-axis' : 'f-line' });
  }
  for (let k = -15; k <= 15; k++) {
    const bx = 303 + 91.2 * k, by = 888;
    const dx = bx - vx, dy = by - vy;
    const t = (far.y1 + slope * vx - vy) / (dy - slope * dx);
    add(floor, 'line', { x1: vx + dx * t, y1: vy + dy * t, x2: bx, y2: by, class: k === 0 ? 'f-axis' : 'f-line' });
  }
}

drawPlan();
drawFloor();
window.addEventListener('resize', drawPlan);
```
